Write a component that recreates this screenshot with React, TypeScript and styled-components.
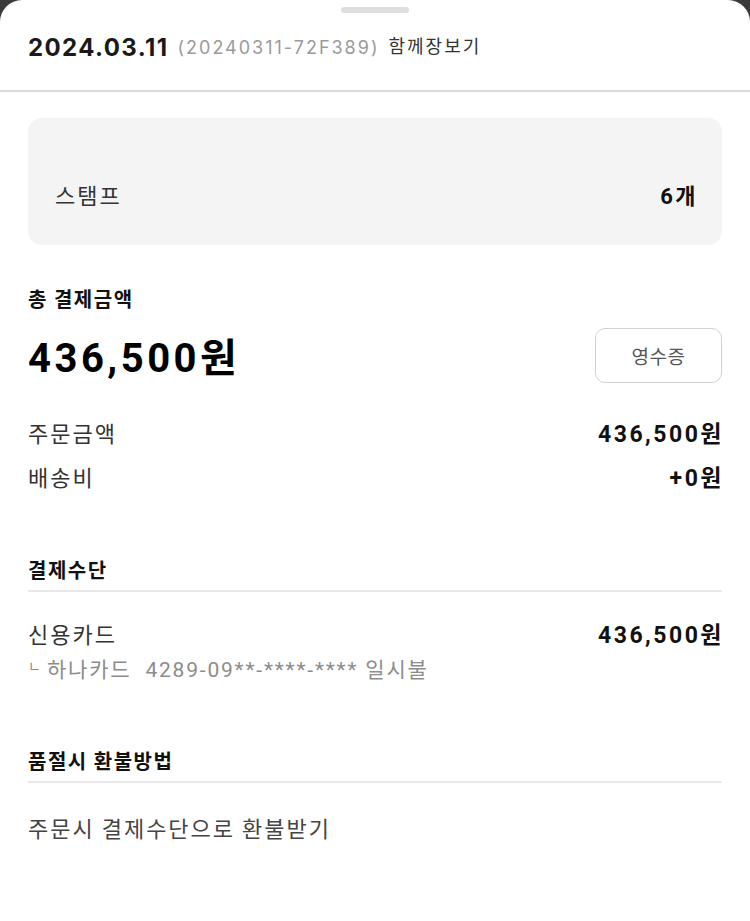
import React from "react";
import styled, { createGlobalStyle } from "styled-components";

const Global = createGlobalStyle`
  html, body { margin: 0; padding: 0; background: #3a3a3a; }
  body { font-family: Inter, "Noto Sans CJK KR", sans-serif; -webkit-font-smoothing: antialiased; }
  * { box-sizing: border-box; }
`;

const Sheet = styled.div`
  width: 750px;
  min-height: 921px;
  background: #fff;
  border-radius: 22px 22px 0 0;
  display: flex;
  flex-direction: column;
  align-items: center;
`;

const Handle = styled.div`
  width: 68px;
  height: 6px;
  border-radius: 3px;
  background: #dedede;
  margin-top: 7px;
`;

const Header = styled.div`
  width: 100%;
  height: 79px;
  padding: 0 28px 8px;
  display: flex;
  align-items: center;
  gap: 9px;
  border-bottom: 2px solid #d9dadb;
`;

const DateText = styled.span`
  font-family: Inter, "Noto Sans CJK KR", sans-serif;
  font-size: 24px;
  font-weight: 700;
  color: #1a1a1a;
  letter-spacing: 1.4px;
`;

const OrderNo = styled.span`
  font-family: Inter, "Noto Sans CJK KR", sans-serif;
  font-size: 18px;
  color: #9a9a9a;
  letter-spacing: 2px;
`;

const Group = styled.span`
  font-family: "Noto Sans CJK KR", sans-serif;
  font-size: 18px;
  color: #333;
  letter-spacing: 2px;
  transform: translateY(-3px);
`;

const Body = styled.div`
  width: 100%;
  padding: 26px 28px 0;
  display: flex;
  flex-direction: column;
`;

const StampBox = styled.div`
  height: 127px;
  background: #f4f4f4;
  border-radius: 14px;
  padding: 24px 26px 0 27px;
  display: flex;
  align-items: center;
`;

const ValueRow = styled.div`
  width: 100%;
  display: flex;
  justify-content: space-between;
  align-items: center;
  font-family: "Noto Sans CJK KR", sans-serif;
  font-size: 22px;
  letter-spacing: 2px;
  color: #333;
`;

const Strong = styled.span<{ size?: number }>`
  font-family: Roboto, "Noto Sans CJK KR", sans-serif;
  font-weight: 700;
  color: #111;
  font-size: ${(p) => p.size ?? 23}px;
  letter-spacing: 2.5px;
  margin-right: -2px;
`;

const SectionTitle = styled.div<{ mt: number }>`
  margin-top: ${(p) => p.mt}px;
  font-family: "Noto Sans CJK KR", sans-serif;
  font-weight: 700;
  font-size: 20px;
  letter-spacing: 1.5px;
  color: #111;
  line-height: 28px;
`;

const TotalRow = styled.div`
  margin-top: 13px;
  display: flex;
  justify-content: space-between;
  align-items: center;
`;

const Total = styled.span`
  font-family: Roboto, "Noto Sans CJK KR", sans-serif;
  font-weight: 700;
  font-size: 40px;
  color: #000;
  letter-spacing: 3.5px;
`;

const ReceiptButton = styled.button`
  width: 127px;
  height: 55px;
  border: 1.5px solid #d2d2d2;
  border-radius: 10px;
  background: #fff;
  font-family: "Noto Sans CJK KR", sans-serif;
  font-size: 19px;
  letter-spacing: 0.5px;
  color: #555;
`;

const Rows = styled.div<{ mt: number }>`
  margin-top: ${(p) => p.mt}px;
  display: flex;
  flex-direction: column;
  gap: 12px;
`;

const Row = styled(ValueRow)`
  height: 32px;
`;

const Divider = styled.div`
  height: 2px;
  background: #e8e8e8;
  margin-top: 6px;
`;

const SubLine = styled.div`
  margin-top: 4px;
  font-family: Roboto, "Noto Sans CJK KR", sans-serif;
  font-size: 21px;
  letter-spacing: 1.8px;
  color: #8c8c8c;
  display: flex;
  align-items: center;
  gap: 6px;
`;

const Corner = styled.span`
  font-size: 14px;
  letter-spacing: 0;
  transform: translateY(-3px);
`;

const Plain = styled.div`
  margin-top: 28px;
  font-family: "Noto Sans CJK KR", sans-serif;
  font-size: 22px;
  letter-spacing: 2px;
  color: #444;
`;

export default function App() {
  return (
    <>
      <Global />
      <Sheet>
        <Handle />
        <Header>
          <DateText>2024.03.11</DateText>
          <OrderNo>(20240311-72F389)</OrderNo>
          <Group>함께장보기</Group>
        </Header>
        <Body>
          <StampBox>
            <ValueRow>
              <span>스탬프</span>
              <Strong size={22}>6개</Strong>
            </ValueRow>
          </StampBox>

          <SectionTitle mt={40}>총 결제금액</SectionTitle>
          <TotalRow>
            <Total>436,500원</Total>
            <ReceiptButton>영수증</ReceiptButton>
          </TotalRow>

          <Rows mt={32}>
            <Row>
              <span>주문금액</span>
              <Strong>436,500원</Strong>
            </Row>
            <Row>
              <span>배송비</span>
              <Strong>+0원</Strong>
            </Row>
          </Rows>

          <SectionTitle mt={64}>결제수단</SectionTitle>
          <Divider />

          <Rows mt={25}>
            <Row>
              <span>신용카드</span>
              <Strong>436,500원</Strong>
            </Row>
          </Rows>
          <SubLine>
            <Corner>ㄴ</Corner>
            <span>하나카드&nbsp; 4289-09**-****-**** 일시불</span>
          </SubLine>

          <SectionTitle mt={64}>품절시 환불방법</SectionTitle>
          <Divider />
          <Plain>주문시 결제수단으로 환불받기</Plain>
        </Body>
      </Sheet>
    </>
  );
}
